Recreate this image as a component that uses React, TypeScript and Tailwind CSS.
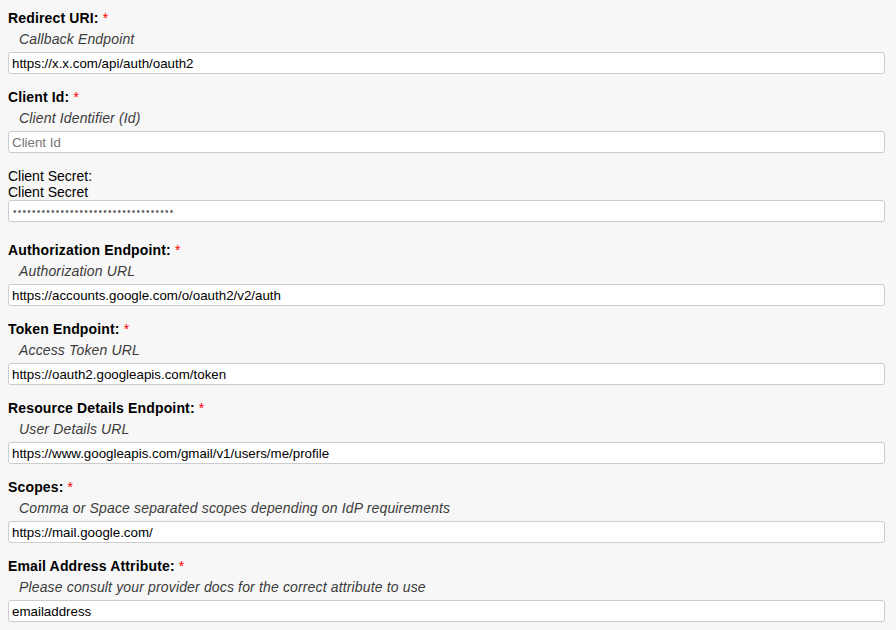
import React from 'react';

type Field = {
  label: string;
  hint: string;
  value?: string;
  placeholder?: string;
};

const before: Field[] = [
  { label: 'Redirect URI:', hint: 'Callback Endpoint', value: 'https://x.x.com/api/auth/oauth2' },
  { label: 'Client Id:', hint: 'Client Identifier (Id)', placeholder: 'Client Id' },
];

const after: Field[] = [
  { label: 'Authorization Endpoint:', hint: 'Authorization URL', value: 'https://accounts.google.com/o/oauth2/v2/auth' },
  { label: 'Token Endpoint:', hint: 'Access Token URL', value: 'https://oauth2.googleapis.com/token' },
  { label: 'Resource Details Endpoint:', hint: 'User Details URL', value: 'https://www.googleapis.com/gmail/v1/users/me/profile' },
  { label: 'Scopes:', hint: 'Comma or Space separated scopes depending on IdP requirements', value: 'https://mail.google.com/' },
  { label: 'Email Address Attribute:', hint: 'Please consult your provider docs for the correct attribute to use', value: 'emailaddress' },
];

const inputCls =
  'block w-full h-[22px] px-[3px] bg-white border border-[#cccccc] rounded-[3px] text-[13.33px] text-black outline-none placeholder:text-[#757575]';

function RequiredField({ f }: { f: Field }) {
  return (
    <div className="flex flex-col mb-[15px]">
      <label className="leading-4 font-bold text-[14px] tracking-[0.15px] text-black">
        {f.label} <span className="font-normal text-[#ff0000]">*</span>
      </label>
      <div className="mt-[5px] pl-[11px] leading-4 italic text-[14px] tracking-[0.15px] text-[#3c3c3c]">{f.hint}</div>
      <input className={`mt-[5px] ${inputCls}`} defaultValue={f.value} placeholder={f.placeholder} />
    </div>
  );
}

export default function App() {
  return (
    <div
      className="min-h-screen bg-[#f7f7f7] pt-[10px] pl-[8px] pr-[11px]"
      style={{ fontFamily: '"Liberation Sans", Arial, sans-serif' }}
    >
      {before.map(f => (
        <RequiredField key={f.label} f={f} />
      ))}

      <div className="flex flex-col mb-[20px] text-[14px] text-black">
        <label className="leading-4">Client Secret:</label>
        <div className="leading-4">Client Secret</div>
        <input
          type="password"
          className="block w-full h-[22px] px-[4px] bg-white border border-[#cccccc] rounded-[3px] text-[10px] tracking-[1.25px] text-[#666666] outline-none"
          defaultValue={'x'.repeat(34)}
        />
      </div>

      {after.map(f => (
        <RequiredField key={f.label} f={f} />
      ))}
    </div>
  );
}
